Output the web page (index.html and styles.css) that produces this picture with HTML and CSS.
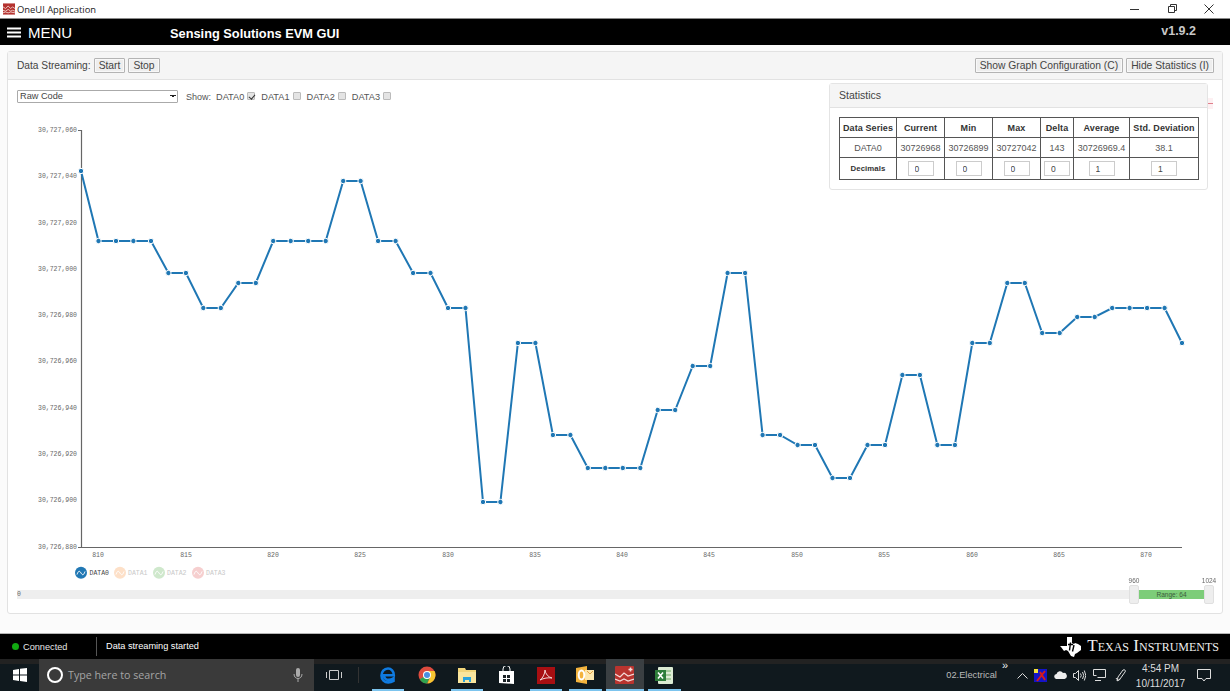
FILE: index.html
```html
<!DOCTYPE html>
<html lang="en">
<head>
<meta charset="utf-8">
<title>OneUI Application</title>
<link rel="stylesheet" href="styles.css">
</head>
<body>
<div class="app">
  <div class="titlebar">
    <svg class="app-icon" width="12" height="12" viewBox="0 0 14 13"><rect width="14" height="13" fill="#b5322f"/><path d="M0 4l3 2 3-3 3 3 2-2 3 2M0 8l3 1 3-2 3 2 2-1 3 1M0 11l3-1 3 1 3-1 5 1" fill="none" stroke="#f2d8d4" stroke-width="1"/></svg>
    <span class="app-name">OneUI Application</span>
    <div class="win-controls">
      <svg width="12" height="12" viewBox="0 0 12 12"><path d="M1 6.500h9" stroke="#333" fill="none"/></svg>
      <svg width="12" height="12" viewBox="0 0 12 12"><path d="M2.500 3.500h6v6h-6zM4.500 3.500v-2h6v6h-2" stroke="#333" fill="none"/></svg>
      <svg width="12" height="12" viewBox="0 0 12 12"><path d="M1.500 1.500l9 9M10.500 1.500l-9 9" stroke="#333" fill="none"/></svg>
    </div>
  </div>

  <header class="menubar">
    <div class="menu-btn">
      <svg width="14" height="11" viewBox="0 0 14 11"><path d="M0 1.500h14M0 5.500h14M0 9.500h14" stroke="#fff" stroke-width="2"/></svg>
      <span>MENU</span>
    </div>
    <div class="gui-title">Sensing Solutions EVM GUI</div>
    <div class="version">v1.9.2</div>
  </header>

  <main class="content">
    <section class="panel">
      <div class="panel-heading">
        <span class="label">Data Streaming:</span>
        <button class="btn">Start</button>
        <button class="btn">Stop</button>
        <span class="spacer"></span>
        <button class="btn">Show Graph Configuration (C)</button>
        <button class="btn">Hide Statistics (I)</button>
      </div>
      <div class="panel-body">
        <div class="controls">
          <select class="mode"><option>Raw Code</option></select>
          <span class="show">Show:</span>
          <label class="series">DATA0 <input type="checkbox" checked></label>
          <label class="series">DATA1 <input type="checkbox"></label>
          <label class="series">DATA2 <input type="checkbox"></label>
          <label class="series">DATA3 <input type="checkbox"></label>
        </div>

        <svg class="chart" width="1214" height="472" viewBox="8 108 1214 472">
          <defs>
            <marker id="dot" markerUnits="userSpaceOnUse" markerWidth="8" markerHeight="8" refX="4" refY="4" viewBox="0 0 8 8">
              <circle cx="4" cy="4" r="2.700" fill="#1f77b4" stroke="#fff" stroke-width="1"/>
            </marker>
          </defs>
          <path class="axis" d="M78 130.500h3.500V547M78 547.500H1182"/>
          <g class="tick-y">
            <text x="77" y="132">30,727,060</text>
            <text x="77" y="178">30,727,040</text>
            <text x="77" y="224.500">30,727,020</text>
            <text x="77" y="271">30,727,000</text>
            <text x="77" y="317">30,726,980</text>
            <text x="77" y="363">30,726,960</text>
            <text x="77" y="410">30,726,940</text>
            <text x="77" y="456">30,726,920</text>
            <text x="77" y="502">30,726,900</text>
            <text x="77" y="549">30,726,880</text>
          </g>
          <g class="tick-x">
            <text x="98" y="556.500">810</text>
            <text x="186" y="556.500">815</text>
            <text x="273" y="556.500">820</text>
            <text x="360" y="556.500">825</text>
            <text x="448" y="556.500">830</text>
            <text x="535" y="556.500">835</text>
            <text x="622" y="556.500">840</text>
            <text x="709" y="556.500">845</text>
            <text x="797" y="556.500">850</text>
            <text x="884" y="556.500">855</text>
            <text x="972" y="556.500">860</text>
            <text x="1059" y="556.500">865</text>
            <text x="1146" y="556.500">870</text>
          </g>
          <polyline class="series-line" points="81,171 98.500,241 116,241 133.400,241 151,241 168.400,273 185.900,273 203.300,308 220.800,308 238.300,283 255.800,283 273.200,241 290.700,241 308.200,241 325.700,241 343.200,181 360.600,181 378.100,241 395.600,241 413.100,273 430.500,273 448,308 465.500,308 483,502 500.400,502 517.900,343 535.400,343 552.900,435 570.400,435 587.800,468 605.300,468 622.800,468 640.300,468 657.700,410 675.200,410 692.700,366 710.200,366 727.600,273 745.100,273 762.600,435 780.100,435 797.600,445 815,445 832.500,478 850,478 867.500,445 885,445 902.400,375 919.900,375 937.400,445 954.900,445 972.300,343 989.800,343 1007.300,283 1024.800,283 1042.200,333 1059.700,333 1077.200,317 1094.700,317 1112.200,308 1129.600,308 1147.100,308 1164.600,308 1182,343"/>
          <g class="legend">
            <circle cx="81" cy="572.700" r="6" fill="#1f77b4"/>
            <path class="wave" d="M77 574.500c1.500-4 2.500-4 4-1.500s2.500 2.500 4-1.500"/>
            <text class="on" x="89.500" y="575">DATA0</text>
            <circle cx="120" cy="572.700" r="6" fill="#fde0c8"/>
            <path class="wave" d="M116 574.500c1.500-4 2.500-4 4-1.500s2.500 2.500 4-1.500"/>
            <text x="128" y="575">DATA1</text>
            <circle cx="159" cy="572.700" r="6" fill="#cfe8cc"/>
            <path class="wave" d="M155 574.500c1.500-4 2.500-4 4-1.500s2.500 2.500 4-1.500"/>
            <text x="167" y="575">DATA2</text>
            <circle cx="198" cy="572.700" r="6" fill="#f6cfcf"/>
            <path class="wave" d="M194 574.500c1.500-4 2.500-4 4-1.500s2.500 2.500 4-1.500"/>
            <text x="206" y="575">DATA3</text>
          </g>
        </svg>

        <div class="slider">
          <span class="slider-min">0</span>
          <span class="spacer"></span>
          <span class="handle"><span class="handle-label">960</span></span>
          <span class="range">Range: 64</span>
          <span class="handle"><span class="handle-label">1024</span></span>
        </div>

        <span class="tip-sliver"></span>
        <aside class="stats">
          <div class="stats-heading">Statistics</div>
          <div class="stats-body">
            <table class="stats-table">
              <colgroup>
                <col class="c1"><col class="c2"><col class="c2"><col class="c2"><col class="c3"><col class="c4"><col class="c5">
              </colgroup>
              <tr><th>Data Series</th><th>Current</th><th>Min</th><th>Max</th><th>Delta</th><th>Average</th><th>Std. Deviation</th></tr>
              <tr><td>DATA0</td><td>30726968</td><td>30726899</td><td>30727042</td><td>143</td><td>30726969.4</td><td>38.1</td></tr>
              <tr>
                <th class="dec">Decimals</th>
                <td><input class="dec-input" value="0"></td>
                <td><input class="dec-input" value="0"></td>
                <td><input class="dec-input" value="0"></td>
                <td><input class="dec-input" value="0"></td>
                <td><input class="dec-input" value="1"></td>
                <td><input class="dec-input" value="1"></td>
              </tr>
            </table>
          </div>
        </aside>
      </div>
    </section>
  </main>

  <footer class="statusbar">
    <span class="led"></span>
    <span class="conn">Connected</span>
    <span class="msg">Data streaming started</span>
    <span class="spacer"></span>
    <svg class="ti-logo" width="21" height="20" viewBox="0 0 21 20"><path d="M7 0h5v6l2 1 1-1 3 1 3 2v4l-4 3-2 1-1 3-3-1-3-5-2-1-2 1-3-4-1-1h7z" fill="#fff"/><path d="M10.500 5.500l-1 8M14 8l-1.500 6.500M8 7.500h5" stroke="#000" stroke-width="1.400" fill="none"/></svg>
    <span class="ti-name">Texas Instruments</span>
  </footer>

  <nav class="taskbar">
    <div class="start">
      <svg width="14" height="14" viewBox="0 0 14 14"><path d="M0 2l6-1v5.500H0zM7 .800L14 0v6.500H7zM0 7.500h6V13l-6-1zM7 7.500h7V14l-7-1z" fill="#fff"/></svg>
    </div>
    <div class="search">
      <svg width="18" height="18" viewBox="0 0 18 18"><circle cx="9" cy="9" r="7" fill="none" stroke="#fff" stroke-width="2"/></svg>
      <span class="search-text">Type here to search</span>
      <svg class="mic" width="10" height="14" viewBox="0 0 10 14"><rect x="3" y="0" width="4" height="9" rx="2" fill="#aaa"/><path d="M1 6c0 6 8 6 8 0M5 11v3" fill="none" stroke="#aaa"/></svg>
    </div>
    <svg class="tb-view" width="16" height="12" viewBox="0 0 16 12"><path d="M3.500 1.500h9v9h-9zM.5 3v6M15.500 3v6" fill="none" stroke="#ccc"/></svg>
    <span class="tb-sep"></span>
    <div class="tb-apps">
      <span class="tb-app run">
        <svg width="16" height="17" viewBox="0 0 16 17"><path d="M4 8.200h9.800C14 4 11 1.500 8 1.500c-4 0-6.500 3.500-6.500 7 0 4.500 3 7 6.700 7 2 0 3.700-.5 5.300-1.500v-2.600c-1.500 1-3 1.500-5 1.500-2.300 0-4.500-1.400-4.500-4.700z" fill="none" stroke="#0f7ae0" stroke-width="2.600"/></svg>
      </span>
      <span class="tb-app">
        <svg width="18" height="18" viewBox="0 0 18 18"><circle cx="9" cy="9" r="8.500" fill="#dd4b3e"/><path d="M9 9L1.700 13.200A8.500 8.500 0 0 0 9 17.500L13 9z" fill="#2fa34f"/><path d="M9 5h7.500a8.500 8.500 0 0 1-7 12.500L13 9z" fill="#f6c531"/><circle cx="9" cy="9" r="4" fill="#fff"/><circle cx="9" cy="9" r="3" fill="#4a8fe0"/></svg>
      </span>
      <span class="tb-app run">
        <svg width="18" height="16" viewBox="0 0 18 16"><path d="M0 1h7l1 2h10v13H0z" fill="#f2d57a"/><path d="M0 5h18v11H0z" fill="#f9e59d"/><path d="M5 10h8v5h-2v-2H7v2H5z" fill="#2aa3dc"/></svg>
      </span>
      <span class="tb-app">
        <svg width="17" height="19" viewBox="0 0 17 19"><path d="M5 5V3a3.500 3.500 0 0 1 7 0v2" fill="none" stroke="#fff"/><path d="M1 5h15v13l-15-1z" fill="#fff"/><path d="M5 9h3v3H5zM9 9h3v3H9zM5 13h3v3H5zM9 13h3v3H9z" fill="#1b2226"/></svg>
      </span>
      <span class="tb-app run">
        <svg width="18" height="17" viewBox="0 0 18 17"><rect width="18" height="17" fill="#a80f12"/><path d="M3 13c2.500-1.500 5-6 5-10 .5 4 3 7 7 8-4-.5-8 0-12 2z" fill="none" stroke="#f3d6d6" stroke-width="1"/></svg>
      </span>
      <span class="tb-app run">
        <svg width="18" height="18" viewBox="0 0 18 18"><path d="M0 2l11-2v18l-11-2z" fill="#f3b33d"/><path d="M9 4h9v10H9z" fill="#fde7ae"/><path d="M11 5l3 3 3-3" stroke="#e2a040" fill="none"/><ellipse cx="5.500" cy="9" rx="2.800" ry="4.500" fill="none" stroke="#fff" stroke-width="2"/></svg>
      </span>
      <span class="tb-app run active">
        <svg width="19" height="18" viewBox="0 0 19 18"><rect width="19" height="18" rx="1" fill="#b9342f"/><path d="M0 8l5 3 4-4 4 3 6-2M0 13l5 2 4-2 4 2 6-2" fill="none" stroke="#f4dcd9" stroke-width="1.200"/><path d="M13.500 3.500h4M15.500 1.500v4" stroke="#f4dcd9" stroke-width="1.500"/></svg>
      </span>
      <span class="tb-app run">
        <svg width="18" height="17" viewBox="0 0 18 17"><rect x="3" width="15" height="17" rx="1" fill="#dcebd3"/><path d="M11 4h5M11 8h5M11 12h5" stroke="#6aa860"/><rect y="3" width="11" height="11" fill="#2e7d3a"/><path d="M3 5.500l5 6M8 5.500l-5 6" stroke="#fff" stroke-width="1.600"/></svg>
      </span>
    </div>
    <span class="spacer"></span>
    <div class="tray">
      <span class="tray-label">02.Electrical</span>
      <span class="chev">»</span>
      <svg class="caret" width="11" height="7" viewBox="0 0 11 7"><path d="M.5 6.500l5-5 5 5" fill="none" stroke="#ddd"/></svg>
      <svg class="sensor" width="13" height="13" viewBox="0 0 13 13"><rect width="13" height="13" fill="#1414c8"/><rect width="4" height="4" fill="#f4e23c"/><path d="M3 12l8-10M6 3l5 8" stroke="#d81b1b" stroke-width="2"/></svg>
      <svg width="13" height="8" viewBox="0 0 13 8"><path d="M3 8a2.500 2.500 0 0 1-.5-5A3.500 3.500 0 0 1 9 2a3 3 0 0 1 1.500 6z" fill="#eee"/></svg>
      <svg width="13" height="11" viewBox="0 0 13 11"><path d="M.5 3.500h2l3-3v10l-3-3h-2zM7.500 3.500q1.500 2 0 4M9.500 2q2.500 3.500 0 7M11.300 .5q3 5 0 10" fill="none" stroke="#ddd"/></svg>
      <svg width="13" height="12" viewBox="0 0 13 12"><path d="M.5.500h12v8h-8M.5.500v6h3M2 11.500h6" fill="none" stroke="#ddd"/></svg>
      <svg class="pen" width="13" height="13" viewBox="0 0 13 13"><path d="M2 12l1-4 5-7c2-1 3 1 2 2l-5 7zM1 9c2 3 3 3 4 1" fill="none" stroke="#ddd"/></svg>
      <div class="clock"><span>4:54 PM</span><span>10/11/2017</span></div>
      <svg class="notify" width="14" height="13" viewBox="0 0 14 13"><path d="M.5.500h13v9H9l-2 2.500-2-2.500H.5z" fill="none" stroke="#ddd"/></svg>
    </div>
  </nav>
</div>
</body>
</html>
```

FILE: styles.css
```css
* { box-sizing: border-box; }
html, body { margin: 0; padding: 0; }
body { font-family: "Liberation Sans", Arial, sans-serif; color: #333; background: #fff; overflow: hidden; }
.app { width: 1230px; height: 691px; display: flex; flex-direction: column; }
.spacer { flex: 1; }

.titlebar { height: 19px; display: flex; align-items: center; padding-left: 3px; background: #fff; border-bottom: 1px solid #8a8a8a; flex: none; }
.app-icon { margin-right: 2px; }
.app-name { font-family: "Open Sans", "Liberation Sans", sans-serif; font-size: 9.400px; color: #222; }
.win-controls { margin-left: auto; display: flex; gap: 25px; padding-right: 15px; }

.menubar { height: 26px; flex: none; background: #000; color: #fff; display: flex; align-items: center; padding-left: 7px; }
.menu-btn { display: flex; align-items: center; gap: 7px; width: 163px; font-size: 15px; }
.gui-title { font-size: 12.800px; font-weight: bold; padding-top: 2px; }
.version { margin-left: auto; margin-right: 34px; font-size: 12.500px; font-weight: bold; color: #c8c8c8; margin-top: -3px; }

.content { flex: 1; background: #fbfbfb; padding: 6px 7px 19px 7px; min-height: 0; border-bottom: 1px solid #b5b5b5; }
.panel { height: 100%; background: #fff; border: 1px solid #e2e2e2; border-radius: 3px; display: flex; flex-direction: column; }
.panel-heading { height: 28px; flex: none; background: #f5f5f5; border-bottom: 1px solid #e2e2e2; display: flex; align-items: center; padding: 0 8px 0 9px; gap: 3px; font-size: 10.200px; }
.label { color: #444; }
.btn { height: 15px; padding: 0 4px; font: 10.300px "Liberation Sans", Arial, sans-serif; color: #444; background: #eee; border: 1px solid #b4b4b4; box-shadow: inset 0 0 0 1px #f8f8f8; border-radius: 1px; }

.panel-body { position: relative; flex: 1; display: flex; flex-direction: column; min-height: 0; }
.controls { height: 28px; flex: none; display: flex; align-items: center; padding: 6px 9px 0 9px; font-size: 9.200px; color: #555; }
.mode { appearance: none; width: 161px; height: 13px; margin-bottom: 2px; padding: 0 0 0 2px; font: 9.200px "Liberation Sans", Arial, sans-serif; color: #444; border: 1px solid #aaa; border-radius: 1px; background-color: #fff; background-image: linear-gradient(45deg, transparent 50%, #222 50%), linear-gradient(-45deg, transparent 50%, #222 50%); background-size: 3px 3px; background-repeat: no-repeat; background-position: 152px 4px, 155px 4px; }
.show { margin: 0 5px 0 8px; font-size: 9px; }
.series { display: inline-flex; align-items: center; gap: 3px; margin-right: 6px; }
.series input { appearance: none; position: relative; width: 8px; height: 8px; margin: 0 0 2px 0; background: #e4e4e4; border: 1px solid #bbb; border-radius: 1px; }
.series input:checked::after { content: ""; position: absolute; left: 1.500px; top: -.5px; width: 2.500px; height: 5px; border: solid #333; border-width: 0 1.400px 1.400px 0; transform: rotate(40deg); }

.chart { display: block; flex: none; }
.axis { fill: none; stroke: #666; stroke-width: 1.200; }
.tick-y, .tick-x, .legend { opacity: .99; }
.tick-y text { font: 6.500px "Liberation Mono", monospace; fill: #666; text-anchor: end; }
.tick-x text { font: 6.500px "Liberation Mono", monospace; fill: #666; text-anchor: middle; }
.series-line { fill: none; stroke: #1f77b4; stroke-width: 2; marker-start: url(#dot); marker-mid: url(#dot); marker-end: url(#dot); }
.legend text { font: 6.500px "Liberation Mono", monospace; fill: #c8c8c8; }
.legend text.on { fill: #444; }
.wave { fill: none; stroke: #fff; stroke-width: 1; }

.slider { position: relative; margin: 10px 8px 0 9px; height: 9px; background: #eee; display: flex; align-items: stretch; font-size: 6.500px; color: #666; opacity: .99; }
.slider-min { font-family: "Liberation Mono", monospace; line-height: 9px; }
.handle { position: relative; width: 10px; height: 19px; margin-top: -5px; background: #eee; border: 1px solid #e0e0e0; border-radius: 2px; }
.handle-label { position: absolute; bottom: 19px; left: 50%; transform: translateX(-50%); }
.range { width: 65px; background: #7ccd78; color: #3a5a3a; text-align: center; line-height: 9px; }

.tip-sliver { position: absolute; left: 1200px; top: 18px; width: 5px; height: 11px; background: linear-gradient(#fdf0f2 5px, #e0808c 5px, #e0808c 6px, #fdf0f2 6px); }
.stats { position: absolute; left: 821px; top: 3px; width: 379px; height: 107px; background: #fff; border: 1px solid #e4e4e4; border-radius: 3px; }
.stats-heading { height: 24px; background: #f5f5f5; border-bottom: 1px solid #e2e2e2; padding-left: 9px; font-size: 10.500px; line-height: 23px; color: #444; }
.stats-body { padding: 9px; }
.stats-table { border-collapse: collapse; table-layout: fixed; width: 359px; font-size: 9px; color: #555; }
.stats-table th, .stats-table td { border: 1px solid #555; padding: 0; text-align: center; height: 20px; }
.stats-table th { font-size: 9px; color: #333; letter-spacing: .1px; }
.stats-table th.dec { font-size: 7.800px; }
.stats-table tr:last-child th, .stats-table tr:last-child td { height: 22px; }
.c1 { width: 57px; } .c2 { width: 48px; } .c3 { width: 33px; } .c4 { width: 56px; } .c5 { width: 69px; }
.dec-input { width: 26px; height: 15px; padding: 0 0 0 6px; border: 1px solid #ccc; font: 8.500px "Liberation Sans", Arial, sans-serif; color: #444; text-align: left; display: block; margin: 0 auto; }

.statusbar { height: 25px; flex: none; background: #000; color: #fff; display: flex; align-items: center; padding: 0 11px 0 12px; font-size: 9.200px; }
.led { width: 7px; height: 7px; border-radius: 50%; background: #11a811; margin-right: 4px; }
.conn { width: 73px; color: #e6e6e6; }
.msg { border-left: 1px solid #555; height: 19px; line-height: 18px; padding-left: 9px; }
.ti-logo { margin-right: 6px; }
.ti-name { font-family: "Liberation Serif", serif; font-variant: small-caps; font-size: 17.100px; line-height: 20px; margin-top: -2px; color: #eee; }

.taskbar { height: 32px; flex: none; background: linear-gradient(#222 0, #222 5px, #10191e 5px); color: #ddd; display: flex; align-items: center; }
.start { width: 39px; display: flex; justify-content: center; }
.search { width: 275px; height: 32px; background: #3a3a3a; display: flex; align-items: center; padding: 0 10px 0 7px; gap: 4px; }
.search-text { font-family: "Open Sans", "Liberation Sans", sans-serif; font-size: 10.700px; color: #a5a5a5; }
.mic { margin-left: auto; margin-right: 1px; }
.tb-view { margin-left: 12px; }
.tb-sep { width: 1px; height: 16px; background: #333; margin: 0 0 0 16px; }
.tb-apps { display: flex; margin-left: 9.500px; gap: 1px; }
.tb-app { position: relative; width: 38.500px; height: 32px; display: flex; align-items: center; justify-content: center; }
.tb-app.run::after { content: ""; position: absolute; left: 3px; right: 3px; bottom: 0; height: 2px; background: #7cc4ee; }
.tb-app.active { background: #3a3f42; }
.tb-app.active::after { left: 0; right: 0; }
.tray { display: flex; align-items: center; gap: 6.500px; padding-right: 19px; }
.tray-label { font-size: 9.300px; color: #bbb; }
.chev { font-size: 11px; color: #eee; align-self: flex-start; margin-left: -1.500px; line-height: 12px; }
.caret { margin-left: 2px; }
.pen { margin-left: 3px; }
.clock { display: flex; flex-direction: column; align-items: center; padding-top: 2px; font-size: 10px; line-height: 15px; width: 60px; margin-left: -4px; color: #ddd; }
```
